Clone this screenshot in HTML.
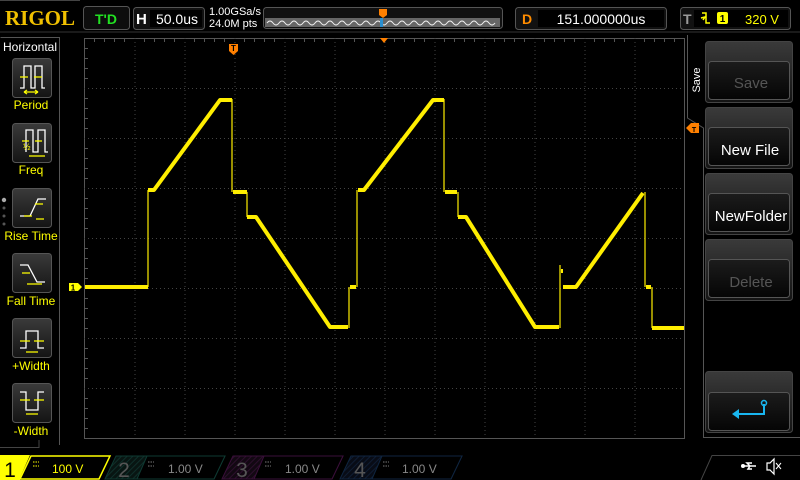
<!DOCTYPE html>
<html><head><meta charset="utf-8"><style>
html,body{margin:0;padding:0;background:#000;width:800px;height:480px;overflow:hidden}
svg{display:block}
text{font-family:"Liberation Sans",sans-serif}
text.serif{font-family:"Liberation Serif",serif}
</style></head><body>
<svg width="800" height="480" viewBox="0 0 800 480" xmlns="http://www.w3.org/2000/svg">
<defs>
<linearGradient id="btn" x1="0" y1="0" x2="0" y2="1"><stop offset="0" stop-color="#3a3a3a"/><stop offset="1" stop-color="#141414"/></linearGradient>
<linearGradient id="box" x1="0" y1="0" x2="0" y2="1"><stop offset="0" stop-color="#1c1c1c"/><stop offset="1" stop-color="#050505"/></linearGradient>
<pattern id="h2" width="4" height="4" patternUnits="userSpaceOnUse" patternTransform="rotate(45)"><rect width="4" height="4" fill="#081512"/><line x1="0" y1="0" x2="0" y2="4" stroke="#0f2f2a" stroke-width="2"/></pattern>
<pattern id="h3" width="4" height="4" patternUnits="userSpaceOnUse" patternTransform="rotate(45)"><rect width="4" height="4" fill="#120812"/><line x1="0" y1="0" x2="0" y2="4" stroke="#2c0f2c" stroke-width="2"/></pattern>
<pattern id="h4" width="4" height="4" patternUnits="userSpaceOnUse" patternTransform="rotate(45)"><rect width="4" height="4" fill="#080c16"/><line x1="0" y1="0" x2="0" y2="4" stroke="#0f1d33" stroke-width="2"/></pattern>
</defs>

<!-- top bar -->
<line x1="0" y1="32" x2="800" y2="32" stroke="#333" stroke-width="1"/>
<line x1="0" y1="0.5" x2="80" y2="0.5" stroke="#444"/>
<text class="serif" x="5" y="25" font-weight="bold" font-size="21" fill="#f0c000">RIGOL</text>
<rect x="83.5" y="6.5" width="46" height="23" rx="3" fill="#0d0d0d" stroke="#555"/>
<text x="106" y="24" text-anchor="middle" font-weight="bold" font-size="14" fill="#22e022">T'D</text>
<rect x="133.5" y="7.5" width="71" height="22" rx="3" fill="#111" stroke="#555"/>
<rect x="150" y="10" width="52" height="17" fill="#000"/>
<text x="136" y="24" font-weight="bold" font-size="15" fill="#fff">H</text>
<text x="177" y="24" text-anchor="middle" font-size="14" fill="#fff">50.0us</text>
<text x="209" y="15" font-size="11" fill="#fff">1.00GSa/s</text>
<text x="209" y="27" font-size="11" fill="#fff">24.0M pts</text>
<rect x="263.5" y="7.5" width="239" height="21" rx="3" fill="#111" stroke="#555"/>
<rect x="265" y="18" width="235" height="9" fill="#666"/>
<path d="M267 23 q3 -4 6 0 t6 0 t6 0 t6 0 t6 0 t6 0 t6 0 t6 0 t6 0 t6 0 t6 0 t6 0 t6 0 t6 0 t6 0 t6 0 t6 0 t6 0 t6 0 t6 0 t6 0 t6 0 t6 0 t6 0 t6 0 t6 0 t6 0 t6 0 t6 0 t6 0 t6 0 t6 0 t6 0 t6 0 t6 0 t6 0 t6 0 t6 0" fill="none" stroke="#eee" stroke-width="1"/>
<rect x="380" y="18" width="3" height="9" fill="#2a8fd0"/>
<path d="M379 9 h8 v6 l-4 3 l-4 -3z" fill="#ff8000"/>
<rect x="515.5" y="7.5" width="151" height="22" rx="3" fill="#111" stroke="#555"/>
<rect x="538" y="10" width="126" height="17" fill="#000"/>
<text x="522" y="24" font-weight="bold" font-size="14" fill="#ff8c00">D</text>
<text x="601" y="24" text-anchor="middle" font-size="14" fill="#fff">151.000000us</text>
<rect x="680.5" y="7.5" width="110" height="22" rx="3" fill="#111" stroke="#555"/>
<rect x="694" y="10" width="94" height="17" fill="#000"/>
<text x="683" y="24" font-weight="bold" font-size="14" fill="#999">T</text>
<path d="M702 13 h4 v10 h4 M701 18 l4 -1 l-2 3" fill="none" stroke="#ff0" stroke-width="1.5"/>
<rect x="717" y="12" width="11" height="12" rx="2" fill="#ff0"/>
<text x="722.5" y="22" text-anchor="middle" font-size="10" font-weight="bold" fill="#000">1</text>
<text x="745" y="24" font-size="13" fill="#ff0">320 V</text>

<!-- left panel -->
<path d="M0.5 37.5 H59.5 V445" fill="none" stroke="#555"/>
<text x="30" y="51" text-anchor="middle" font-size="12" fill="#fff">Horizontal</text>
<g stroke="#555" fill="url(#btn)">
<rect x="12.5" y="58.5" width="39" height="39" rx="3"/>
<rect x="12.5" y="123.5" width="39" height="39" rx="3"/>
<rect x="12.5" y="188.5" width="39" height="39" rx="3"/>
<rect x="12.5" y="253.5" width="39" height="39" rx="3"/>
<rect x="12.5" y="318.5" width="39" height="39" rx="3"/>
<rect x="12.5" y="383.5" width="39" height="39" rx="3"/>
</g>
<g fill="none" stroke="#fff" stroke-width="1.3">
<path d="M20 88 h4 v-22 h7 v22 h4 v-22 h7 v22 h3"/>
<path d="M26 152 v-22 h7 v22 h5 v-22 h7 v22 h3"/>
<path d="M20 216 h10 l8 -17 h8"/>
<path d="M20 265 h8 l9 17 h8"/>
<path d="M20 348 h6 v-17 h12 v17 h6"/>
<path d="M20 392 h6 v18 h12 v-18 h6"/>
</g>
<g fill="none" stroke="#ff0" stroke-width="1.3">
<path d="M20 77 h8 M34 77 h8 M24 92 h14 M24 92 l3 -2 M24 92 l3 2 M38 92 l-3 -2 M38 92 l-3 2"/>
<path d="M22 141 h7 M35 141 h7 M29 156 h16"/>
<path d="M24 216 h8 M35 204 h8 M36 219 h8"/>
<path d="M22 273 h8 M34 284 h8 M27 284 h8"/>
<path d="M20 341 h10 M34 341 h10 M26 352 h12"/>
<path d="M20 400 h10 M34 400 h10 M26 414 h12"/>
</g>
<text x="23" y="150" font-size="9" fill="#ff0">½</text>
<g font-size="12" fill="#ff0" text-anchor="middle">
<text x="31" y="109">Period</text>
<text x="31" y="174">Freq</text>
<text x="31" y="240">Rise Time</text>
<text x="31" y="305">Fall Time</text>
<text x="31" y="370">+Width</text>
<text x="31" y="435">-Width</text>
</g>
<circle cx="4" cy="200" r="2.2" fill="#aaa"/><circle cx="4" cy="208" r="1.5" fill="#555"/><circle cx="4" cy="216" r="1.5" fill="#555"/><circle cx="4" cy="224" r="1.5" fill="#555"/>

<!-- grid -->
<rect x="84.5" y="38.5" width="600" height="400" fill="none" stroke="#555"/>
<g stroke="#444" stroke-dasharray="1,3">
<path d="M135 38V438M185 38V438M235 38V438M285 38V438M335 38V438M385 38V438M435 38V438M485 38V438M535 38V438M585 38V438M635 38V438"/>
<path d="M84 88.5H684M84 138.5H684M84 188.5H684M84 238.5H684M84 288.5H684M84 338.5H684M84 388.5H684"/>
</g>
<g stroke="#555">
<path d="M84 48.5h4M84 58.5h4M84 68.5h4M84 78.5h4M84 98.5h4M84 108.5h4M84 118.5h4M84 128.5h4M84 148.5h4M84 158.5h4M84 168.5h4M84 178.5h4M84 198.5h4M84 208.5h4M84 218.5h4M84 228.5h4M84 248.5h4M84 258.5h4M84 268.5h4M84 278.5h4M84 298.5h4M84 308.5h4M84 318.5h4M84 328.5h4M84 348.5h4M84 358.5h4M84 368.5h4M84 378.5h4M84 398.5h4M84 408.5h4M84 418.5h4M84 428.5h4"/>
<path d="M94.5 38v4M104.5 38v4M114.5 38v4M124.5 38v4M144.5 38v4M154.5 38v4M164.5 38v4M174.5 38v4M194.5 38v4M204.5 38v4M214.5 38v4M224.5 38v4M244.5 38v4M254.5 38v4M264.5 38v4M274.5 38v4M294.5 38v4M304.5 38v4M314.5 38v4M324.5 38v4M344.5 38v4M354.5 38v4M364.5 38v4M374.5 38v4M394.5 38v4M404.5 38v4M414.5 38v4M424.5 38v4M444.5 38v4M454.5 38v4M464.5 38v4M474.5 38v4M494.5 38v4M504.5 38v4M514.5 38v4M524.5 38v4M544.5 38v4M554.5 38v4M564.5 38v4M574.5 38v4M594.5 38v4M604.5 38v4M614.5 38v4M624.5 38v4M644.5 38v4M654.5 38v4M664.5 38v4M674.5 38v4"/>
</g>
<path d="M229 44 h9 v7 l-4.5 4 l-4.5 -4z" fill="#ff8000"/>
<text x="233.5" y="51" text-anchor="middle" font-size="8" font-weight="bold" fill="#000">T</text>
<path d="M380 38 h8 l-4 5z" fill="#ff8000"/>

<!-- waveform -->
<g fill="none" stroke="#ffee00" stroke-linejoin="round">
<path stroke-width="2" opacity="0.6" d="M148 287 V190 M232 99 V192 M247 192 V217 M349 328 V287 M357 287 V190 M444 99 V192 M458 192 V217 M560 328 V265 M645 192 V287 M652 287 V328"/>
<path stroke-width="4" d="M85 287 H148 M148 190 H154 L220 100 H232 M233 192 H247 M247 217 H256 L330 327 H348 M350 287 H356 M358 190 H364 L433 100 H444 M445 192 H457 M458 217 H466 L535 327 H559 M561 271 H563 M563 287 H576 L643 193 M646 287 H651 M652 328 H684"/>
</g>
<path d="M69 283 h9 l4 4 l-4 4 h-9z" fill="#ff0"/>
<text x="73" y="290.5" text-anchor="middle" font-size="8" font-weight="bold" fill="#000">1</text>

<!-- right panel -->
<path d="M687.5 35 V118 L703.5 128 V437.5 H800" fill="none" stroke="#555"/>
<text transform="translate(700,80) rotate(-90)" text-anchor="middle" font-size="11" fill="#fff">Save</text>
<path d="M686 128 l5 -5 h8 v10 h-8z" fill="#ff8000"/>
<text x="694" y="132" text-anchor="middle" font-size="7" font-weight="bold" fill="#000">T</text>
<g stroke="#444">
<rect x="705.5" y="41.5" width="87" height="61" rx="3" fill="url(#btn)"/>
<rect x="705.5" y="107.5" width="87" height="61" rx="3" fill="url(#btn)"/>
<rect x="705.5" y="173.5" width="87" height="61" rx="3" fill="url(#btn)"/>
<rect x="705.5" y="239.5" width="87" height="61" rx="3" fill="url(#btn)"/>
<rect x="705.5" y="371.5" width="87" height="61" rx="3" fill="url(#btn)"/>
</g>
<g stroke="#555" fill="url(#box)">
<rect x="708.5" y="61.5" width="81" height="38" rx="3"/>
<rect x="708.5" y="127.5" width="81" height="38" rx="3"/>
<rect x="708.5" y="193.5" width="81" height="38" rx="3"/>
<rect x="708.5" y="259.5" width="81" height="38" rx="3"/>
<rect x="708.5" y="392.5" width="81" height="38" rx="3"/>
</g>
<g font-size="15" text-anchor="middle">
<text x="751" y="88" fill="#555">Save</text>
<text x="750" y="155" fill="#fff">New File</text>
<text x="751" y="221" fill="#fff">NewFolder</text>
<text x="751" y="287" fill="#555">Delete</text>
</g>
<path d="M764 404 V414 H737" fill="none" stroke="#19b6f0" stroke-width="2"/>
<path d="M732 414 l7 -5 v10z" fill="#19b6f0"/>
<circle cx="764" cy="403" r="2.5" fill="none" stroke="#19b6f0" stroke-width="1.5"/>

<!-- bottom bar -->
<path d="M0 447.5 H39 V440" fill="none" stroke="#444"/>
<!-- ch2 -->
<path d="M105 479 L116 456 H225 L214 479z" fill="url(#h2)" stroke="#0e3a32"/>
<path d="M137 479 L147 456 H225 L214 479z" fill="#000" stroke="#0e3a32"/>
<text x="124" y="477" text-anchor="middle" font-size="21" fill="#555">2</text>
<path d="M148 462h6M148 466h6" stroke="#777" stroke-dasharray="1.5,1"/>
<text x="168" y="473" font-size="12" fill="#888">1.00 V</text>
<!-- ch3 -->
<path d="M222 479 L233 456 H343 L332 479z" fill="url(#h3)" stroke="#3a0f3a"/>
<path d="M254 479 L264 456 H343 L332 479z" fill="#000" stroke="#3a0f3a"/>
<text x="242" y="477" text-anchor="middle" font-size="21" fill="#555">3</text>
<path d="M265 462h6M265 466h6" stroke="#777" stroke-dasharray="1.5,1"/>
<text x="285" y="473" font-size="12" fill="#888">1.00 V</text>
<!-- ch4 -->
<path d="M340 479 L351 456 H462 L451 479z" fill="url(#h4)" stroke="#0f2540"/>
<path d="M372 479 L382 456 H462 L451 479z" fill="#000" stroke="#0f2540"/>
<text x="360" y="477" text-anchor="middle" font-size="21" fill="#555">4</text>
<path d="M383 462h6M383 466h6" stroke="#777" stroke-dasharray="1.5,1"/>
<text x="402" y="473" font-size="12" fill="#888">1.00 V</text>
<!-- ch1 -->
<rect x="0" y="455" width="20" height="25" fill="#ff0"/>
<path d="M20 455 H30 L19 480 H12z" fill="#ff0"/>
<path d="M20 479 L31 456 H110 L99 479z" fill="#000" stroke="#ff0" stroke-width="1.5"/>
<text x="10" y="477" text-anchor="middle" font-size="21" fill="#000">1</text>
<path d="M33 462h6M33 466h6" stroke="#ff0" stroke-dasharray="1.5,1"/>
<text x="52" y="473" font-size="12" fill="#ff0">100 V</text>

<path d="M701 480 L712 455.5 H800" fill="none" stroke="#444"/>
<path d="M742 466 h14 M750 466 l-3 -3 h5 M750 466 l-2 3 h4" fill="none" stroke="#fff" stroke-width="1.5"/>
<circle cx="743" cy="466" r="2" fill="#fff"/>
<path d="M767 463 h3 l4 -4 v15 l-4 -4 h-3z" fill="none" stroke="#fff" stroke-width="1.2"/>
<path d="M776 463 l5 6 M781 463 l-5 6" stroke="#fff"/>
</svg>
</body></html>
